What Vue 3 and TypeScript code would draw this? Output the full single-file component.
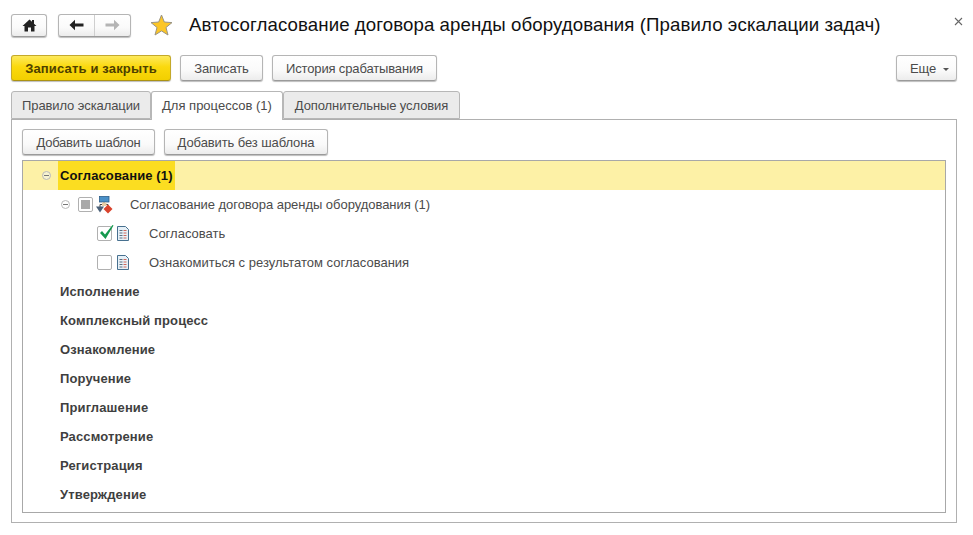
<script setup lang="ts">
const groups: string[] = ['Исполнение', 'Комплексный процесс', 'Ознакомление', 'Поручение', 'Приглашение', 'Рассмотрение', 'Регистрация', 'Утверждение']
</script>

<template>
  <div class="page">
    <header class="top">
      <button class="btn home" aria-label="Домой">
        <svg width="15" height="13" viewBox="0 0 15 13"><path d="M7.5 0.5 L0.5 7 H2.5 V12.5 H6 V8.5 H9 V12.5 H12.5 V7 H14.5 L12 4.7 V1 H10 V2.8 Z" fill="#222"/></svg>
      </button>
      <div class="btn nav">
        <span class="nav-part left">
          <svg width="15" height="12" viewBox="0 0 15 12"><path d="M0.5 6 L6 0.8 V4.5 H14.5 V7.5 H6 V11.2 Z" fill="#222"/></svg>
        </span>
        <span class="nav-part">
          <svg width="15" height="12" viewBox="0 0 15 12"><path d="M14.5 6 L9 0.8 V4.5 H0.5 V7.5 H9 V11.2 Z" fill="#b4b4b4"/></svg>
        </span>
      </div>
      <svg class="star" width="23" height="22" viewBox="0 0 23 22"><path d="M11.5 1 L14.3 8 L22 8.6 L16 13.5 L18 21 L11.5 16.9 L5 21 L7 13.5 L1 8.6 L8.7 8 Z" fill="#fcc626" stroke="#9a9484" stroke-width="1"/></svg>
      <h1 class="title">Автосогласование договора аренды оборудования (Правило эскалации задач)</h1>
      <svg class="close" width="9" height="9" viewBox="0 0 9 9"><path d="M1 1 L8 8 M8 1 L1 8" stroke="#666" stroke-width="1.1"/></svg>
    </header>

    <div class="toolbar">
      <button class="btn primary">Записать и закрыть</button>
      <button class="btn w1">Записать</button>
      <button class="btn w2">История срабатывания</button>
      <button class="btn more">Еще <i class="caret"></i></button>
    </div>

    <div class="tabs">
      <div class="tab t1">Правило эскалации</div>
      <div class="tab active t2">Для процессов (1)</div>
      <div class="tab t3">Дополнительные условия</div>
    </div>

    <section class="panel">
      <div class="panel-bar">
        <button class="btn b1">Добавить шаблон</button>
        <button class="btn b2">Добавить без шаблона</button>
      </div>
      <div class="tree">
        <div class="row selected">
          <span class="toggle lvl0"></span>
          <span class="sel-label">Согласование (1)</span>
        </div>
        <div class="row">
          <span class="toggle lvl1"></span>
          <span class="check mixed"><i></i></span>
          <svg class="proc" width="17" height="18" viewBox="0 0 17 18">
            <path d="M8 6 V9 M4 11 V8.5 H12 V10" stroke="#444" stroke-width="1" fill="none"/>
            <rect x="3.5" y="0.5" width="9.5" height="5.5" fill="#4a90c8" stroke="#2d5f8a" stroke-width="0.8"/>
            <rect x="6" y="6.5" width="4.5" height="3.5" fill="#e8cfa8"/>
            <path d="M0 10.5 H8 L4 16.5 Z" fill="#4a6078"/>
            <path d="M12 8.5 L16.5 13 L12 17.5 L7.5 13 Z" fill="#d9432c"/>
          </svg>
          <span class="label l1">Согласование договора аренды оборудования (1)</span>
        </div>
        <div class="row">
          <span class="check on">
            <svg width="17" height="17" viewBox="0 0 17 17"><path d="M2 9 L4 7 L7 10.5 L14.5 1 L15.5 1.5 L7.5 15 Z" fill="#14994e"/></svg>
          </span>
          <svg class="doc" width="12" height="15" viewBox="0 0 12 15">
            <path d="M0.5 0.5 H8.5 L11.5 3.5 V14.5 H0.5 Z" fill="#e6f0f7" stroke="#47708f"/>
            <path d="M2.5 4.5 H5.5 M2.5 7 H5.5 M2.5 9.5 H5.5 M2.5 12 H5.5" stroke="#5b6f80"/>
            <path d="M6.5 4.5 H9.5 M6.5 7 H9.5 M6.5 9.5 H9.5 M6.5 12 H9.5" stroke="#d0685c"/>
          </svg>
          <span class="label">Согласовать</span>
        </div>
        <div class="row">
          <span class="check"></span>
          <svg class="doc" width="12" height="15" viewBox="0 0 12 15">
            <path d="M0.5 0.5 H8.5 L11.5 3.5 V14.5 H0.5 Z" fill="#e6f0f7" stroke="#47708f"/>
            <path d="M2.5 4.5 H5.5 M2.5 7 H5.5 M2.5 9.5 H5.5 M2.5 12 H5.5" stroke="#5b6f80"/>
            <path d="M6.5 4.5 H9.5 M6.5 7 H9.5 M6.5 9.5 H9.5 M6.5 12 H9.5" stroke="#d0685c"/>
          </svg>
          <span class="label">Ознакомиться с результатом согласования</span>
        </div>
        <div v-for="g in groups" :key="g" class="row group">{{ g }}</div>
      </div>
    </section>
  </div>
</template>

<style>
html, body { margin: 0; background: #fff; }
</style>

<style scoped>
.page {
  width: 973px;
  height: 535px;
  box-sizing: border-box;
  padding: 13px 16px 0 11px;
  font-family: "Liberation Sans", Arial, sans-serif;
  font-size: 13px;
  color: #4b4b4b;
  overflow: hidden;
}
.top { display: flex; align-items: center; height: 24px; position: relative; }
.btn {
  box-sizing: border-box;
  height: 26px;
  padding: 1px 0 0;
  border: 1px solid #b5b5b5;
  border-bottom-color: #9a9a9a;
  border-radius: 3px;
  background: linear-gradient(#ffffff 0%, #fafafa 60%, #ececec 100%);
  box-shadow: 0 1px 1px #bdbdbd;
  font: inherit;
  letter-spacing: -0.14px;
  color: #4b4b4b;
  white-space: nowrap;
}
.home { width: 36px; height: 23px; padding: 0; display: flex; align-items: center; justify-content: center; }
.nav { width: 73px; height: 23px; padding: 0; margin-left: 11px; display: flex; }
.nav-part { flex: 1; display: flex; align-items: center; justify-content: center; }
.nav-part.left { border-right: 1px solid #cfcfcf; }
.star { margin-left: 19px; }
.title {
  margin: 0 0 0 16px;
  font-size: 18.67px;
  font-weight: 400;
  letter-spacing: 0.08px;
  color: #111;
  white-space: nowrap;
}
.close { position: absolute; right: -6px; top: 4px; }
.toolbar { display: flex; gap: 9px; margin-top: 18px; }
.primary {
  width: 160px;
  font-weight: 700;
  letter-spacing: 0.16px;
  color: #4d4000;
  background: linear-gradient(#fde95c 0%, #fbd90e 45%, #f2cf00 100%);
  border-color: #c4a92a;
  border-bottom-color: #ab9213;
}
.w1 { width: 83px; }
.w2 { width: 165px; }
.more { margin-left: auto; width: 61px; padding: 1px 0 0 13px; text-align: left; }
.caret {
  display: inline-block;
  width: 0; height: 0;
  margin-left: 3px;
  vertical-align: 2px;
  border: 3px solid transparent;
  border-top: 3px solid #555;
  border-bottom: 0;
}
.tabs { display: flex; margin-top: 10px; height: 28px; position: relative; z-index: 1; }
.tab {
  box-sizing: border-box;
  height: 28px;
  line-height: 28px;
  text-align: center;
  letter-spacing: -0.1px;
  background: #ebebeb;
  border: 1px solid #b7b7b7;
  border-radius: 3px 3px 0 0;
  white-space: nowrap;
}
.t1 { width: 140px; }
.t2 { width: 132px; letter-spacing: 0; }
.t3 { width: 177px; }
.tab.active { background: #fff; height: 29px; border-bottom: 0; }
.panel {
  box-sizing: border-box;
  height: 404px;
  border: 1px solid #b0b0b0;
  padding: 9px 10px 9px 10px;
  display: flex;
  flex-direction: column;
}
.panel-bar { display: flex; gap: 9px; }
.b1 { width: 133px; letter-spacing: -0.25px; }
.b2 { width: 164px; letter-spacing: -0.1px; }
.tree {
  flex: 1;
  box-sizing: border-box;
  margin-top: 5px;
  border: 1px solid #a8a8a8;
  overflow: hidden;
}
.row { height: 29px; display: flex; align-items: center; white-space: nowrap; }
.selected { background: #fdf1a6; color: #111; font-weight: 700; }
.sel-label { background: #fbdd21; height: 29px; line-height: 29px; padding: 0 2px; width: 117px; box-sizing: border-box; letter-spacing: 0.12px; }
.toggle {
  box-sizing: border-box;
  width: 9px; height: 9px;
  border: 1px solid #b9b9b9;
  border-radius: 50%;
  position: relative;
  flex: none;
}
.toggle::after { content: ""; position: absolute; left: 1px; right: 1px; top: 3px; height: 1px; background: #777; }
.lvl0 { margin-left: 19px; background: #f7f3d0; }
.lvl0 + .sel-label { margin-left: 7px; }
.lvl1 { margin-left: 38px; }
.check {
  box-sizing: border-box;
  width: 15px; height: 15px;
  flex: none;
  margin-left: 74px;
  border: 1px solid #b0b0b0;
  border-radius: 2px;
  background: #fff;
  position: relative;
}
.check svg { position: absolute; left: 0; top: -3px; }
.check.mixed { margin-left: 8px; display: flex; align-items: center; justify-content: center; }
.check.mixed i { width: 9px; height: 9px; background: #a9a9a9; display: block; }
.proc { margin-left: 3px; flex: none; }
.doc { margin-left: 5px; flex: none; }
.label { margin-left: 20px; }
.l1 { margin-left: 17px; letter-spacing: -0.04px; }
.group { padding-left: 37px; font-weight: 700; color: #3f3f3f; letter-spacing: 0.12px; }
</style>
